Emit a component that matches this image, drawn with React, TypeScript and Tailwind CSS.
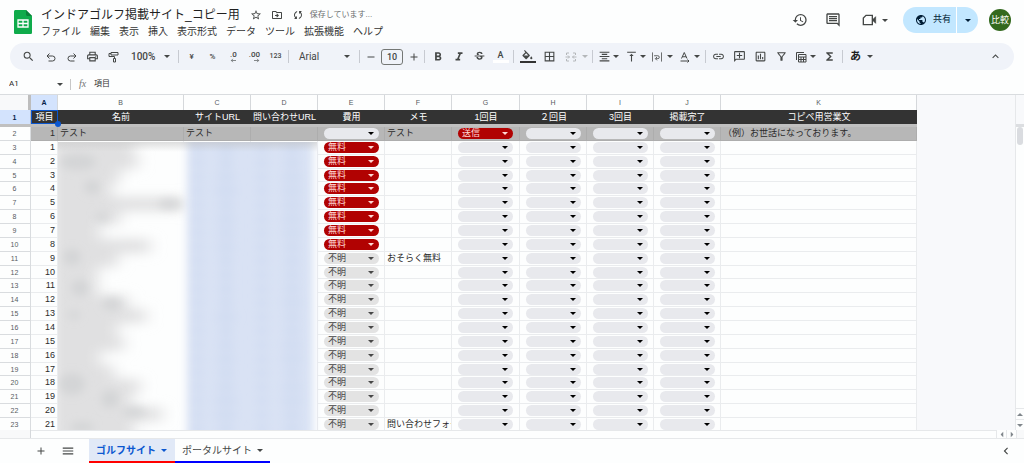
import type { ReactNode } from 'react';
import clsx from 'clsx';
import {
  MdAdd,
  MdBorderAll,
  MdChevronLeft,
  MdFormatAlignCenter,
  MdFormatBold,
  MdFormatItalic,
  MdFunctions,
  MdHistory,
  MdKeyboardArrowUp,
  MdLink,
  MdMenu,
  MdOutlineAddComment,
  MdOutlineComment,
  MdOutlineDriveFileMove,
  MdOutlineFilterAlt,
  MdOutlineInsertChart,
  MdOutlinePrint,
  MdPublic,
  MdRemove,
  MdSearch,
  MdStarBorder,
  MdStrikethroughS,
  MdSync,
  MdVerticalAlignTop,
} from 'react-icons/md';

const menus = ['ファイル', '編集', '表示', '挿入', '表示形式', 'データ', 'ツール', '拡張機能', 'ヘルプ'];

const columns = [
  { letter: 'A', title: '項目', width: 'w-[27px]' },
  { letter: 'B', title: '名前', width: 'w-[126px]' },
  { letter: 'C', title: 'サイトURL', width: 'w-[67px]' },
  { letter: 'D', title: '問い合わせURL', width: 'w-[67px]' },
  { letter: 'E', title: '費用', width: 'w-[67px]' },
  { letter: 'F', title: 'メモ', width: 'w-[67px]' },
  { letter: 'G', title: '1回目', width: 'w-[68px]' },
  { letter: 'H', title: '２回目', width: 'w-[67px]' },
  { letter: 'I', title: '3回目', width: 'w-[67px]' },
  { letter: 'J', title: '掲載完了', width: 'w-[67px]' },
  { letter: 'K', title: 'コピペ用営業文', width: 'w-[196px]' },
];

const memos: Record<number, string> = { 9: 'おそらく無料', 21: '問い合わせフォー' };

const rows = Array.from({ length: 21 }, (_, i) => ({
  no: i + 1,
  fee: i < 8 ? '無料' : '不明',
  memo: memos[i + 1] ?? '',
}));

// widths of the smudged names, one per row
const nameWidths = [76, 80, 62, 54, 126, 62, 42, 92, 60, 40, 40, 70, 88, 60, 66, 42, 56, 82, 74, 104, 76];

const smudges = [
  [20, 20, 18, 8],
  [34, 45, 8, 7],
  [112, 62, 12, 5],
  [44, 75, 7, 4],
  [14, 115, 9, 8],
  [22, 146, 9, 8],
  [54, 162, 10, 6],
  [16, 173, 6, 4],
  [14, 242, 13, 11],
  [52, 257, 9, 9],
  [76, 270, 12, 5],
  [24, 285, 12, 5],
];

const Caret = ({ className }: { className?: string }) => (
  <svg viewBox="0 0 6 3" className={clsx('w-[6px] h-[3px] shrink-0', className)} fill="currentColor" aria-hidden="true">
    <path d="M0 0h6L3 3z" />
  </svg>
);

const Sep = () => <span className="w-px h-[13px] mx-[2px] shrink-0 bg-[#c7cad1]" />;

const Tool = ({ label, children, className }: { label: string; children: ReactNode; className?: string }) => (
  <button aria-label={label} className={clsx('h-5 shrink-0 flex items-center justify-center', className ?? 'w-[21px]')}>
    {children}
  </button>
);

const DropTool = ({ label, children, className }: { label: string; children: ReactNode; className?: string }) => (
  <button aria-label={label} className={clsx('h-5 shrink-0 flex items-center justify-between pr-[3px]', className ?? 'w-[27px] pl-[3px]')}>
    {children}
    <Caret className="w-[5px]" />
  </button>
);

const Icon = ({ children, className }: { children: ReactNode; className?: string }) => (
  <svg viewBox="0 0 24 24" className={clsx('shrink-0', className ?? 'w-[12px] h-[12px]')} fill="none" stroke="currentColor" strokeWidth="2" aria-hidden="true">
    {children}
  </svg>
);

const SheetsLogo = () => (
  <svg viewBox="0 0 18 24" className="w-[18px] h-6" aria-hidden="true">
    <path d="M1.6 0H12l6 6v16.4c0 .9-.7 1.6-1.6 1.6H1.600C.7 24 0 23.300 0 22.400V1.600C0 .7.7 0 1.600 0z" fill="#0fab4b" />
    <path d="M12 0l6 6h-4.600C12.600 6 12 5.400 12 4.600z" fill="#0a8039" />
    <path d="M4 10h10v7H4zM9 10v7M4 13.500h10" fill="none" stroke="#fff" strokeWidth="1.300" />
  </svg>
);

const Header = () => (
  <header className="flex h-[43px] pl-[14px] pr-[13px]">
    <a href="#" aria-label="スプレッドシート ホーム" className="pt-[10px] shrink-0">
      <SheetsLogo />
    </a>
    <div className="pl-[9px] pt-[6px]">
      <div className="flex items-center h-[18px] text-[#444746]">
        <h1 className="text-[12px] leading-[18px] text-[#1f1f1f] whitespace-nowrap">インドアゴルフ掲載サイト_コピー用</h1>
        <button aria-label="スターを付ける" className="ml-[10px]"><MdStarBorder className="size-3" /></button>
        <button aria-label="移動" className="ml-[9px]"><MdOutlineDriveFileMove className="size-3" /></button>
        <MdSync className="size-3 ml-[9px] rotate-45" />
        <span className="ml-[6px] text-[8px] text-[#6b6e70] whitespace-nowrap">保存しています...</span>
      </div>
      <nav className="flex gap-[9px] text-[10px] leading-[16px] text-[#333]">
        {menus.map((m) => (
          <button key={m} className="whitespace-nowrap">{m}</button>
        ))}
      </nav>
    </div>
    <div className="ml-auto mt-[7px] h-[26px] flex items-center text-[#444746]">
      <button aria-label="変更履歴"><MdHistory className="size-4" /></button>
      <button aria-label="コメント" className="ml-[17px]"><MdOutlineComment className="size-4" /></button>
      <button aria-label="通話" className="ml-[20px] flex items-center gap-[5px]">
        <Icon className="size-4">
          <path d="M7.500 5H17v14H3.500V9z" />
          <path d="M18 11l4-4v10l-4-4z" fill="currentColor" strokeWidth="1" />
        </Icon>
        <Caret />
      </button>
      <div className="ml-[15px] flex h-full rounded-full overflow-hidden bg-[#c2e7ff] text-[#001d35]">
        <button className="flex items-center gap-[6px] w-[53px] pl-[12px] text-[9px] whitespace-nowrap">
          <MdPublic className="size-3 shrink-0" />
          共有
        </button>
        <button aria-label="共有オプション" className="w-[22px] flex items-center justify-center border-l border-white">
          <Caret />
        </button>
      </div>
      <button className="ml-[11px] size-[22px] rounded-full bg-[#33691e] text-white text-[9px] leading-[22px] text-center whitespace-nowrap">比較</button>
    </div>
  </header>
);

const Toolbar = () => (
  <div role="toolbar" className="mx-[10px] h-[27px] pl-[7px] pr-[12px] rounded-full bg-[#f0f3f9] flex items-center text-[#444746] font-[Roboto,'Noto_Sans_CJK_JP',sans-serif]">
    <Tool label="検索" className="w-[23px]"><MdSearch className="size-[13px]" /></Tool>
    <Tool label="元に戻す">
      <Icon><path d="M9 5L4 10l5 5M4 10h11a5 5 0 0 1 0 10H7" /></Icon>
    </Tool>
    <Tool label="やり直し">
      <Icon><path d="M15 5l5 5-5 5M20 10H9a5 5 0 0 0 0 10h8" /></Icon>
    </Tool>
    <Tool label="印刷"><MdOutlinePrint className="size-[13px]" /></Tool>
    <Tool label="書式を貼り付け">
      <Icon><path d="M6 3h14v5H6zM6 5H2v6h11v4M11 15h4v7h-4z" /></Icon>
    </Tool>
    <button className="w-[52px] shrink-0 pl-[7px] pr-[6px] flex items-center justify-between text-[10px] font-medium">
      100%
      <Caret />
    </button>
    <Sep />
    <Tool label="通貨"><span className="text-[8px] font-medium">¥</span></Tool>
    <Tool label="パーセント"><span className="text-[8px] font-medium">%</span></Tool>
    <Tool label="小数点以下を減らす">
      <span className="flex flex-col text-[8px] leading-[7px] font-medium">
        .0
        <Icon className="w-[7px] h-[5px] self-end"><path strokeWidth="3" d="M24 12H2M9 4l-7 8 7 8" /></Icon>
      </span>
    </Tool>
    <Tool label="小数点以下を増やす">
      <span className="flex flex-col text-[8px] leading-[7px] font-medium">
        .00
        <Icon className="w-[7px] h-[5px] self-end"><path strokeWidth="3" d="M0 12h22M15 4l7 8-7 8" /></Icon>
      </span>
    </Tool>
    <Tool label="表示形式の詳細"><span className="text-[7px] font-medium">123</span></Tool>
    <Sep />
    <button className="w-[66px] shrink-0 pl-[8px] pr-[7px] flex items-center justify-between text-[10px]">
      Arial
      <Caret />
    </button>
    <Sep />
    <Tool label="縮小" className="w-[17px]"><MdRemove className="size-3" /></Tool>
    <input aria-label="フォントサイズ" defaultValue="10" className="w-[22px] h-4 mx-[2px] shrink-0 border border-[#747775] rounded-[3px] text-center text-[9px] font-medium" />
    <Tool label="拡大" className="w-[17px]"><MdAdd className="size-3" /></Tool>
    <Sep />
    <Tool label="太字"><MdFormatBold className="size-[14px]" /></Tool>
    <Tool label="斜体"><MdFormatItalic className="size-[14px]" /></Tool>
    <Tool label="取り消し線"><MdStrikethroughS className="size-[13px]" /></Tool>
    <Tool label="テキストの色">
      <span className="flex flex-col items-center text-[9px] leading-[10px] font-medium">
        A
        <span className="w-4 h-[3px] bg-white" />
      </span>
    </Tool>
    <Sep />
    <Tool label="塗りつぶしの色" className="w-[23px]">
      <span className="flex flex-col items-center">
        <svg viewBox="0 0 24 20" className="w-[13px] h-[11px]" fill="currentColor" aria-hidden="true">
          <path d="M7 0L5.600 1.400l2.400 2.400L3 9a1.500 1.500 0 0 0 0 2l5.500 5.500a1.500 1.500 0 0 0 2 0L16 11a1.500 1.500 0 0 0 0-2zM5.500 10L9.500 6l4 4zM19 11.500s-2 2.200-2 3.500a2 2 0 0 0 4 0c0-1.300-2-3.500-2-3.500z" />
        </svg>
        <span className="w-4 h-[2px] bg-[#333]" />
      </span>
    </Tool>
    <Tool label="枠線"><MdBorderAll className="size-[13px]" /></Tool>
    <button aria-label="セルを結合" disabled className="w-[30px] h-5 shrink-0 pl-[5px] pr-[2px] flex items-center justify-between text-[#b4b7ba]">
      <Icon><path d="M8 4H3v4M16 4h5v4M8 20H3v-4M16 20h5v-4M1 12h8M6 9l3 3-3 3M23 12h-8M18 9l-3 3 3 3" /></Icon>
      <Caret className="w-[5px]" />
    </button>
    <Sep />
    <DropTool label="水平方向の配置"><MdFormatAlignCenter className="size-[13px]" /></DropTool>
    <DropTool label="垂直方向の配置"><MdVerticalAlignTop className="size-[13px]" /></DropTool>
    <DropTool label="テキストを折り返す">
      <Icon className="w-[10px] h-[12px]"><path d="M1 1v22M23 1v22M5 9h9a3 3 0 0 1 0 7H9M12 12l-4 4 4 4" /></Icon>
    </DropTool>
    <DropTool label="テキストの回転">
      <Icon><path d="M5 15L10.500 3 16 15M7 11.500h7M3 20h17M17 17l3 3-3 3" /></Icon>
    </DropTool>
    <Sep />
    <Tool label="リンクを挿入"><MdLink className="size-[13px]" /></Tool>
    <Tool label="コメントを挿入"><MdOutlineAddComment className="size-[13px] -scale-x-100" /></Tool>
    <Tool label="グラフを挿入"><MdOutlineInsertChart className="size-[13px]" /></Tool>
    <Tool label="フィルタを作成"><MdOutlineFilterAlt className="size-[13px]" /></Tool>
    <DropTool label="テーブル ビュー">
      <Icon><path d="M7 7h15v15H7zM7 12h15M7 17h15M12 12v10M17 12v10M3 18V3h15" /></Icon>
    </DropTool>
    <Tool label="関数"><MdFunctions className="size-[13px]" /></Tool>
    <Sep />
    <DropTool label="入力ツール" className="w-[31px] pl-[5px]">
      <span className="text-[11px] leading-[14px] font-bold text-[#1f1f1f]">あ</span>
    </DropTool>
    <Tool label="メニューを隠す" className="ml-auto w-[13px]"><MdKeyboardArrowUp className="size-[13px]" /></Tool>
  </div>
);

const FormulaBar = () => (
  <div className="flex items-center h-6 pt-[4px] pl-[9px] text-[#444746] shrink-0">
    <input aria-label="名前ボックス" defaultValue="A1" className="w-[48px] text-[8px] text-[#1f1f1f] font-[Roboto,sans-serif]" />
    <Caret />
    <span className="w-px h-[11px] ml-[7px] bg-[#c7c7c7]" />
    <label htmlFor="formula" className="ml-[8px] w-[15px] text-[10px] leading-[12px] italic text-[#747775] font-['Liberation_Serif',serif]">fx</label>
    <input id="formula" defaultValue="項目" className="flex-1 min-w-0 text-[8px] text-[#333]" />
  </div>
);

const chipTone: Record<string, string> = {
  '無料': 'bg-[#b10202] text-[#ffd9d4]',
  '送信': 'bg-[#b10202] text-[#ffd9d4]',
  '不明': 'bg-[#e3e3e3] text-[#474747]',
  '': 'bg-[#e8e9ed] text-black',
};

const Chip = ({ label, value }: { label: string; value: string }) => (
  <div className={clsx('relative w-[55px] h-[11px] ml-[6px] rounded-full', chipTone[value])}>
    <select aria-label={label} defaultValue={value} className="block appearance-none w-full h-[11px] pl-[4px] rounded-full text-[9px] leading-[11px]">
      <option value={value}>{value}</option>
    </select>
    <Caret className="absolute right-[5px] top-[4px] pointer-events-none" />
  </div>
);

const cell = 'p-0 border-r border-b border-[#eaecee] overflow-hidden whitespace-nowrap';
const rowHead = 'p-0 border-r border-b border-[#d9dcdf] text-[7px] leading-[11px] font-normal text-[#575b5f] text-center pr-[1px]';
const darkCell = 'p-0 border-r border-b border-[#adadad] bg-[#b7b7b7] overflow-hidden whitespace-nowrap';

const Sheet = () => (
  <table className="table-fixed w-[917px] h-[337px] shrink-0 border-separate border-spacing-0 bg-[#fdfefe] text-[9px] leading-[11px] text-[#2b2b2b]">
    <colgroup>
      <col className="w-[31px]" />
      {columns.map((c) => (
        <col key={c.letter} className={c.width} />
      ))}
    </colgroup>
    <thead>
      <tr className="h-[15px] text-[7px] text-[#575b5f]">
        <td className="p-0 bg-[#f8f9fa] border-r-[3px] border-[#bdbdbd]" />
        {columns.map((c) => (
          <th
            key={c.letter}
            scope="col"
            className={clsx('p-0 border-r border-[#d5d8db]', c.letter === 'A' ? 'bg-[#d3e3fd] text-[#041e49] font-bold' : 'font-normal')}
          >
            {c.letter}
          </th>
        ))}
      </tr>
      <tr className="h-[14px] text-white">
        <th scope="row" className="p-0 border-r border-[#bdbdbd] bg-[#d3e3fd] text-[7px] font-bold text-[#041e49] pr-[1px]">1</th>
        {columns.map((c) => (
          <th
            key={c.letter}
            className={clsx(
              'p-0 bg-[#333] font-normal whitespace-nowrap',
              c.letter === 'A' && 'relative outline outline-[#0b57d0] -outline-offset-1',
            )}
          >
            {c.title}
            {c.letter === 'A' && <span className="absolute -right-[3px] -bottom-[3px] size-[6px] rounded-full bg-[#0b57d0]" />}
          </th>
        ))}
      </tr>
      <tr className="h-[3px]">
        <td colSpan={12} className="p-0 bg-[#c0c0c0]" />
      </tr>
    </thead>
    <tbody>
      <tr>
        <th scope="row" className={rowHead}>2</th>
        <td className={clsx(darkCell, 'text-right pr-[2px]')}>1</td>
        <td className={clsx(darkCell, 'pl-[2px]')}>テスト</td>
        <td className={clsx(darkCell, 'pl-[2px]')}>テスト</td>
        <td className={darkCell} />
        <td className={darkCell}><Chip label="費用 2" value="" /></td>
        <td className={clsx(darkCell, 'pl-[2px]')}>テスト</td>
        <td className={darkCell}><Chip label="1回目 2" value="送信" /></td>
        <td className={darkCell}><Chip label="２回目 2" value="" /></td>
        <td className={darkCell}><Chip label="3回目 2" value="" /></td>
        <td className={darkCell}><Chip label="掲載完了 2" value="" /></td>
        <td className={clsx(darkCell, 'pl-[2px]')}>（例）お世話になっております。</td>
      </tr>
      {rows.map((r) => (
        <tr key={r.no}>
          <th scope="row" className={rowHead}>{r.no + 2}</th>
          <td className={clsx(cell, 'text-right pr-[2px]')}>{r.no}</td>
          <td className={cell} />
          <td className={cell} />
          <td className={cell} />
          <td className={cell}><Chip label={`費用 ${r.no + 2}`} value={r.fee} /></td>
          <td className={clsx(cell, 'pl-[2px]')}>{r.memo}</td>
          <td className={cell}><Chip label={`1回目 ${r.no + 2}`} value="" /></td>
          <td className={cell}><Chip label={`２回目 ${r.no + 2}`} value="" /></td>
          <td className={cell}><Chip label={`3回目 ${r.no + 2}`} value="" /></td>
          <td className={cell}><Chip label={`掲載完了 ${r.no + 2}`} value="" /></td>
          <td className={cell} />
        </tr>
      ))}
    </tbody>
  </table>
);

const Redaction = () => (
  <svg viewBox="0 0 263 292" className="absolute left-[58px] top-[47px] w-[263px] h-[292px]" aria-hidden="true">
    <defs>
      <filter id="wide" x="-30%" y="-20%" width="160%" height="140%">
        <feGaussianBlur stdDeviation="8 6" />
      </filter>
      <filter id="soft" x="-20%" y="-20%" width="140%" height="140%">
        <feGaussianBlur stdDeviation="4" />
      </filter>
      <linearGradient id="shade" x1="0" y1="0" x2="0" y2="1">
        <stop offset="0" stopColor="#b7b7b7" stopOpacity="0.45" />
        <stop offset="1" stopColor="#b7b7b7" stopOpacity="0" />
      </linearGradient>
    </defs>
    <rect width="259" height="292" fill="#fdfefe" />
    <g filter="url(#wide)" fill="#e0e0e1">
      {nameWidths.map((w, i) => (
        <rect key={i} x="-8" y={i * 14 - 1} width={w + 8} height="14" />
      ))}
      <rect x="-8" y="290" width="84" height="20" />
    </g>
    <g filter="url(#soft)" fill="#cfd0d1" fillOpacity="0.7">
      {smudges.map(([cx, cy, rx, ry]) => (
        <ellipse key={cy} cx={cx} cy={cy} rx={rx} ry={ry} />
      ))}
    </g>
    <rect x="129" y="-12" width="126" height="320" fill="#d9e2f4" filter="url(#soft)" />
    <g filter="url(#soft)" fill="#cdd9f0" fillOpacity="0.6">
      {nameWidths.map((w, i) => (
        <g key={i}>
          <ellipse cx="140" cy={i * 14 + 7} rx="5" ry="5" />
          <ellipse cx="168" cy={i * 14 + 7} rx={8 + (w % 5)} ry="6" />
          <ellipse cx="204" cy={i * 14 + 7} rx="6" ry="5" />
          <ellipse cx="234" cy={i * 14 + 7} rx={9 + (w % 4)} ry="6" />
        </g>
      ))}
    </g>
    <rect width="259" height="10" fill="url(#shade)" />
  </svg>
);

const BottomTabs = () => (
  <footer className="flex h-[25px] shrink-0 pl-[32px] pr-[11px] border-t border-[#e6e8ea] text-[#444746]">
    <button aria-label="シートを追加" className="w-[18px] flex items-center justify-center"><MdAdd className="size-3" /></button>
    <button aria-label="すべてのシート" className="ml-[9px] mr-[13px] w-[17px] flex items-center justify-center"><MdMenu className="size-[14px]" /></button>
    <button className="flex items-center gap-[5px] h-[24px] pl-[7px] w-[86px] bg-[#e1e9f7] border-b-2 border-[#f00] text-[10px] font-bold text-[#0b57d0] whitespace-nowrap">
      ゴルフサイト
      <Caret className="w-[5px]" />
    </button>
    <button className="flex items-center gap-[5px] h-[24px] pl-[7px] w-[95px] border-b-2 border-[#00f] text-[10px] whitespace-nowrap">
      ポータルサイト
      <Caret className="w-[5px]" />
    </button>
    <button aria-label="サイドパネルを表示" className="ml-auto"><MdChevronLeft className="size-[14px]" /></button>
  </footer>
);

const App = () => {
  return (
    <div className="h-screen flex flex-col overflow-hidden bg-[#fdfefe] font-['Liberation_Sans','Noto_Sans_CJK_JP',sans-serif]">
      <Header />
      <Toolbar />
      <FormulaBar />
      <main className="flex-1 min-h-0 flex border-t border-[#d9dcdf] overflow-hidden">
        <div className="relative flex-1 min-w-0 flex items-start overflow-hidden bg-[#f8f9fb]">
          <Sheet />
          <Redaction />
        </div>
        <div className="w-[9px] shrink-0 flex flex-col border-l border-[#e6e8ea] text-[#80868b]">
          <div className="h-[29px] bg-[#f8f9fb]" />
          <div className="h-[3px] bg-[#dcdee1]" />
          <div className="mx-px h-[18px] rounded-full bg-[#dadce0]" />
          <button aria-label="上へ" className="mt-auto h-[11px] flex items-center justify-center border-t border-[#e6e8ea]"><Caret className="w-[4px] rotate-180" /></button>
          <button aria-label="下へ" className="h-[11px] flex items-center justify-center border-t border-[#e6e8ea]"><Caret className="w-[4px]" /></button>
        </div>
      </main>
      <div className="flex h-[8px] shrink-0 text-[#80868b]">
        <div className="w-[31px] border-r border-[#d5d8db] bg-[#f8f9fa]" />
        <div className="flex-1 border-t border-[#e6e8ea]" />
        <button aria-label="左へ" className="w-[10px] flex items-center justify-center border-l border-[#e6e8ea]"><Caret className="w-[4px] rotate-90" /></button>
        <button aria-label="右へ" className="w-[10px] flex items-center justify-center border-l border-[#e6e8ea]"><Caret className="w-[4px] -rotate-90" /></button>
        <div className="w-[8px] border-l border-[#e6e8ea] bg-[#f8f9fa]" />
      </div>
      <BottomTabs />
    </div>
  );
};

export default App;
